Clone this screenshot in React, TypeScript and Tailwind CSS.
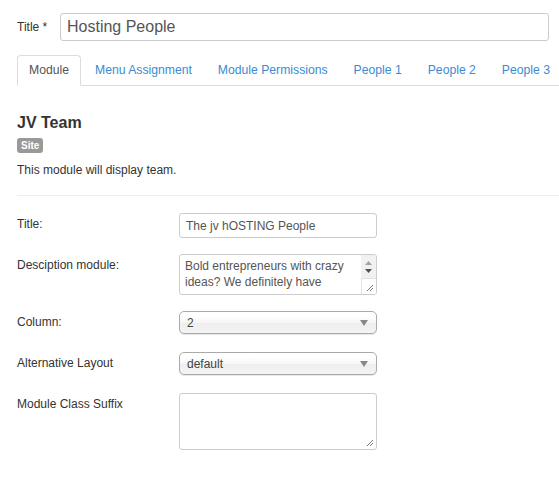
import React from 'react'

const tabs = ['Module', 'Menu Assignment', 'Module Permissions', 'People 1', 'People 2', 'People 3']

function Grip() {
  return (
    <svg className="absolute right-[2px] bottom-[2px]" width="8" height="8" viewBox="0 0 8 8">
      <path d="M7 1L1 7M7 4L4 7" stroke="#777" strokeWidth="1" />
    </svg>
  )
}

function SelectBox({ value }: { value: string }) {
  return (
    <div className="relative w-[198px] h-[23px] rounded-[5px] border border-[#aaa] bg-[linear-gradient(#fff_20%,#f6f6f6_50%,#eee_52%,#f4f4f4_100%)] shadow-[0_1px_1px_rgba(0,0,0,0.1)] flex items-center pl-[7px] text-[12px] text-[#444]">
      {value}
      <svg className="absolute right-[8px] top-[8px]" width="8" height="6" viewBox="0 0 8 6">
        <path d="M0 0H8L4 6Z" fill="#888" />
      </svg>
    </div>
  )
}

function Row({ label, children, className = '' }: { label: string; children: React.ReactNode; className?: string }) {
  return (
    <div className={`flex ${className}`}>
      <div className="w-[162px] shrink-0 pt-[3px] leading-[16px] text-[12px] text-[#333]">{label}</div>
      {children}
    </div>
  )
}

export default function App() {
  return (
    <div className="w-[559px] h-[493px] overflow-hidden bg-white pl-[17px] pt-[13px] [font-family:Liberation_Sans,Arial,sans-serif] text-[#333]">
      {/* Title */}
      <div className="flex items-center pr-[10px]">
        <label className="w-[43px] shrink-0 text-[12px] text-[#333]">Title *</label>
        <div className="flex-1 h-[28px] border border-[#ccc] rounded-[3px] flex items-center pl-[6px] text-[16px] text-[#555]">
          Hosting People
        </div>
      </div>

      {/* Tabs */}
      <ul className="mt-[14px] flex border-b border-[#ddd] h-[31px] whitespace-nowrap">
        {tabs.map((t, i) => (
          <li
            key={t}
            className={
              i === 0
                ? 'mr-[2px] px-[11px] h-[31px] flex items-center text-[12.2px] text-[#555] bg-white border border-[#ddd] border-b-white rounded-t-[4px] -mb-px'
                : 'mr-[2px] px-[11px] h-[30px] flex items-center text-[12.2px] text-[#3a8bd3] border border-transparent'
            }
          >
            {t}
          </li>
        ))}
      </ul>

      {/* Module info */}
      <h2 className="mt-[27px] text-[16px] font-bold leading-[20px] text-[#333]">JV Team</h2>
      <div className="w-fit mt-[5px] h-[15px] px-[4px] rounded-[3px] bg-[#999] text-white text-[10px] font-bold leading-[15px]">
        Site
      </div>
      <p className="mt-[9px] text-[12px] leading-[16px] text-[#333]">This module will display team.</p>
      <div className="mt-[17px] border-t border-[#eee]" />

      {/* Form */}
      <div className="mt-[17px]">
        <Row label="Title:">
          <div className="w-[198px] h-[25px] border border-[#ccc] rounded-[3px] flex items-center pl-[6px] text-[12px] text-[#555]">
            The jv hOSTING People
          </div>
        </Row>

        <Row label="Desciption module:" className="mt-[16px]">
          <div className="relative w-[198px] h-[41px] border border-[#ccc] rounded-[3px] flex overflow-hidden">
            <div className="flex-1 pl-[5px] pt-[3px] text-[12px] leading-[16px] text-[#555]">
              Bold entrepreneurs with crazy
              <br />
              ideas? We definitely have
            </div>
            <div className="w-[15px] flex flex-col">
              <div className="h-[23px] bg-[#f1f1f1] flex flex-col items-center justify-center gap-[4px]">
                <svg width="7" height="4" viewBox="0 0 7 4">
                  <path d="M0 4L3.5 0L7 4Z" fill="#a3a3a3" />
                </svg>
                <svg width="7" height="4" viewBox="0 0 7 4">
                  <path d="M0 0H7L3.5 4Z" fill="#505050" />
                </svg>
              </div>
              <div className="flex-1 bg-white border-l border-t border-[#e3e3e3]" />
            </div>
            <Grip />
          </div>
        </Row>

        <Row label="Column:" className="mt-[16px]">
          <SelectBox value="2" />
        </Row>

        <Row label="Alternative Layout" className="mt-[18px]">
          <SelectBox value="default" />
        </Row>

        <Row label="Module Class Suffix" className="mt-[18px]">
          <div className="relative w-[198px] h-[57px] border border-[#ccc] rounded-[3px]">
            <Grip />
          </div>
        </Row>
      </div>
    </div>
  )
}
